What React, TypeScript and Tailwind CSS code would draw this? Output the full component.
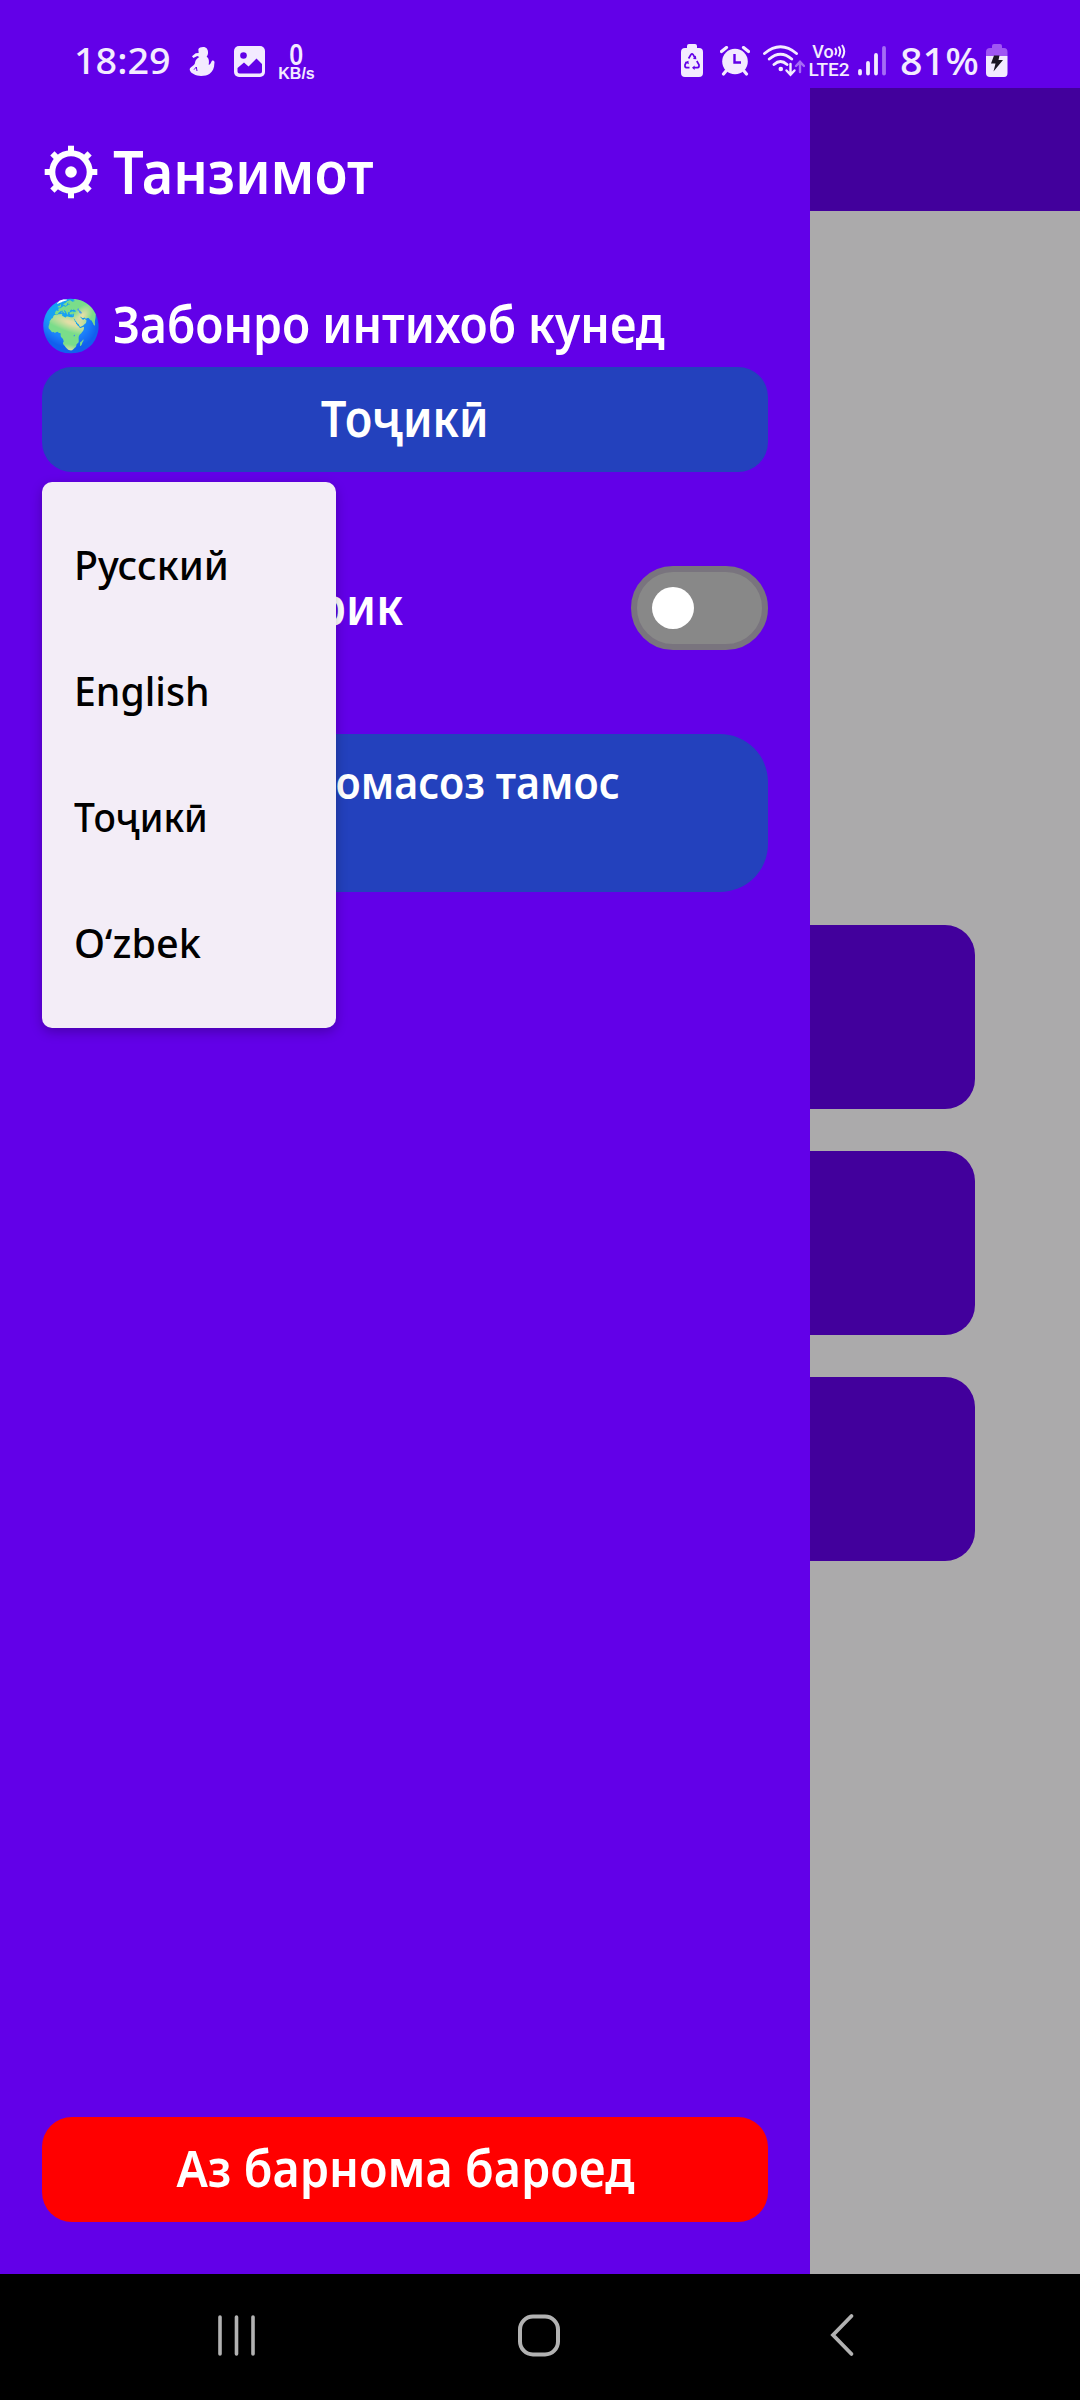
import type { ReactNode } from "react";

const languages = [
  { name: "Русский", cls: "scale-x-[0.985]" },
  { name: "English", cls: "scale-x-[0.98]" },
  { name: "Тоҷикӣ", cls: "scale-x-[0.93]" },
  { name: "Oʻzbek", cls: "scale-x-[0.99]" },
];

function Icon({ box, w, h, cls, children }: { box: string; w: number; h: number; cls: string; children: ReactNode }) {
  return (
    <svg viewBox={box} width={w} height={h} className={`block shrink-0 ${cls}`} fill="none">
      {children}
    </svg>
  );
}

function StatusBar() {
  return (
    <header className="flex h-[88px] w-full items-start bg-[#6200e8] text-[#f3ebff]">
      <span className="mt-[39px] ml-[74px] w-[98px] origin-left scale-x-[1.02] text-[37px] leading-[42px] font-medium whitespace-nowrap">18:29</span>
      {/* seated figure */}
      <Icon box="384 78 84 93" w={28} h={31} cls="mt-[46px] ml-[16px]">
        <path
          fill="currentColor"
          d="M415 88C418 80 436 78 441 86C446 94 445 104 440 110C447 114 448 124 446 134C452 134 453 126 456 122C462 120 465 125 463 131C463 143 458 154 449 161C438 169 414 170 402 163C392 158 387 151 390 145C394 138 404 137 405 128C406 120 412 114 418 111L412 108L400 114L396 109L407 100L416 99Z"
        />
        <path d="M402 149L409 141L411 153" stroke="#6200e8" strokeWidth="3" />
      </Icon>
      {/* picture */}
      <Icon box="0 0 31 31" w={31} h={31} cls="mt-[46px] ml-[18px]">
        <rect width="31" height="31" rx="5" fill="currentColor" />
        <circle cx="9.5" cy="9.5" r="3.3" fill="#6200e8" />
        <path d="M3.5 22L10 16.5L14.5 20.5L22.5 12.5L28 18V25.5Q28 27.5 26 27.5H5.500Q3.500 27.500 3.500 25.500Z" fill="#6200e8" />
      </Icon>
      <div className="mt-[39px] ml-[12px] flex w-[39px] flex-col items-center">
        <span className="h-[27px] origin-center scale-x-[0.84] text-[29px] leading-[29px] font-semibold">0</span>
        <span className="h-[16px] font-['Liberation_Sans'] text-[16px] leading-[16px] font-bold">KB/s</span>
      </div>

      {/* recycling battery */}
      <Icon box="0 0 22 33" w={22} h={33} cls="mt-[44px] ml-[365px]">
        <path d="M6 4V2Q6 0 8 0H14Q16 0 16 2V4H18Q22 4 22 8V29Q22 33 18 33H4Q0 33 0 29V8Q0 4 4 4Z" fill="currentColor" />
        <path d="M7.600 14.500L9.800 10.700Q11 9.200 12.200 10.700L13.700 13.500M15.800 17L18 20.800Q18.400 23.400 16.500 23.700H13M8.500 23.700H5.500Q3.600 23.400 4 20.800L5.500 18" stroke="#6200e8" strokeWidth="1.7" />
        <path d="M12 15L15.400 15.300L14.800 11.500ZM11 23.700L13.600 21.500V26ZM3.800 18.200L7.400 16.700L7.800 20.200Z" fill="#6200e8" />
      </Icon>
      {/* alarm */}
      <Icon box="0 0 30 30" w={30} h={30} cls="mt-[46px] ml-[17px]">
        <circle cx="15" cy="15.500" r="12.800" fill="currentColor" />
        <path d="M1.500 5.500L6.500 1.500M28.500 5.500L23.500 1.500M6 25L3.500 28M24 25L26.500 28" stroke="currentColor" strokeWidth="3.200" strokeLinecap="round" />
        <path d="M14.500 8V16.500H21" stroke="#6200e8" strokeWidth="2.400" />
      </Icon>
      {/* wi-fi with traffic arrows */}
      <Icon box="0 0 42 32" w={42} h={32} cls="mt-[45px] ml-[13px]">
        <path d="M1.500 8.500Q17.500 -5 33.500 8.500M6.300 14Q17.500 4.500 28.700 14M11 19.500Q17.500 13.500 24 19.500" stroke="currentColor" strokeWidth="2.900" strokeLinecap="round" />
        <circle cx="17.800" cy="24" r="2.300" fill="currentColor" />
        <path d="M27.500 19V29.500M23.500 25.500L27.500 29.800L31.500 25.500" stroke="currentColor" strokeWidth="2.400" strokeLinecap="round" />
        <path d="M37 27V17M33 21L37 16.800L41 21" stroke="#a56cf5" strokeWidth="2.400" strokeLinecap="round" />
      </Icon>
      <div className="mt-[44px] ml-[3px] flex w-[42px] flex-col items-center font-[Roboto]">
        <div className="flex h-[16px] items-start">
          <span className="text-[18px] leading-[16px] font-medium">Vo</span>
          <Icon box="0 0 12 15" w={12} h={15} cls="">
            <path d="M1 4Q3.500 7.500 1 11M4.500 2.500Q8 7.500 4.500 12.500M8 1Q12.500 7.500 8 14" stroke="currentColor" strokeWidth="2" />
          </Icon>
        </div>
        <span className="h-[18px] text-[19px] leading-[19px] font-medium">LTE2</span>
      </div>
      {/* signal strength */}
      <Icon box="0 0 28 30" w={28} h={30} cls="mt-[46px] ml-[8px]">
        <path d="M2 25V27.500M10 17V27.500M18 9V27.500" stroke="currentColor" strokeWidth="3.800" strokeLinecap="round" />
        <path d="M26 2V27.500" stroke="#a56cf5" strokeWidth="3.800" strokeLinecap="round" />
      </Icon>
      <span className="mt-[39px] ml-[14px] w-[78px] origin-left scale-x-[1.04] text-[38px] leading-[42px] font-medium whitespace-nowrap">81%</span>
      {/* charging battery */}
      <Icon box="0 0 22 33" w={22} h={33} cls="mt-[44px] ml-[8px]">
        <path d="M6 4V2Q6 0 8 0H14Q16 0 16 2V4H18Q21.500 4 21.500 8V12H0V8Q0 4 4 4Z" fill="#a056f3" />
        <path d="M0 12H21.500V29Q21.500 33 18 33H4Q0 33 0 29Z" fill="currentColor" />
        <path d="M8 11.500H13.500L12.500 16H17L7.500 27.500L9.500 19.500H5Z" fill="#1b1524" />
      </Icon>
    </header>
  );
}

function Gear() {
  return (
    <svg viewBox="-27 -27 54 54" width={54} height={54} className="block shrink-0">
      <circle r="18.700" fill="none" stroke="white" strokeWidth="6" />
      <circle r="5.800" fill="white" />
      {[0, 45, 90, 135, 180, 225, 270, 315].map((a) => (
        <rect key={a} x="-3" y="-26.300" width="6" height="7" fill="white" transform={`rotate(${a})`} />
      ))}
    </svg>
  );
}

function LanguageMenu() {
  return (
    <div className="absolute top-[394px] left-[42px] z-10 flex h-[546px] w-[294px] flex-col rounded-[10px] bg-[#f3edf7] py-[20px] text-black shadow-[0_4px_12px_rgba(0,0,0,0.25)]">
      {languages.map((l) => (
        <div key={l.name} className="flex h-[126px] items-center pl-[32px]">
          <span className={`origin-left text-[40px] leading-[54px] font-medium whitespace-nowrap ${l.cls}`}>{l.name}</span>
        </div>
      ))}
    </div>
  );
}

function Drawer() {
  return (
    <aside className="relative flex w-[810px] shrink-0 flex-col bg-[#6200e8] px-[42px] text-white">
      <h1 className="mt-[43px] flex h-[80px] items-center">
        <span className="ml-[2px] translate-y-px">
          <Gear />
        </span>
        <span className="ml-[15px] origin-left scale-x-[0.903] text-[60px] leading-[80px] font-semibold">Танзимот</span>
      </h1>

      <div className="mt-[78px] flex h-[78px] items-start">
        <span className="-ml-[2px] flex w-[73px] translate-y-px text-[50px] leading-[68px]">🌍</span>
        <span className="mt-px origin-left scale-x-[0.924] text-[50px] leading-[68px] font-semibold whitespace-nowrap">Забонро интихоб кунед</span>
      </div>
      <button className="flex h-[105px] w-full items-center justify-center rounded-[30px] bg-[#2341bd] pb-[4px]">
        <span className="scale-x-[0.905] text-[50px] leading-[68px] font-semibold">Тоҷикӣ</span>
      </button>

      <div className="mt-[94px] flex h-[84px] items-center justify-between">
        <span className="mb-[5px] w-[361px] origin-right scale-x-[0.92] text-right text-[50px] leading-[68px] font-semibold whitespace-nowrap">Ҳолати торик</span>
        <span className="flex h-[84px] w-[137px] items-center rounded-full border-[6px] border-[#79747e] bg-[#888888] pl-[15px]">
          <span className="size-[42px] rounded-full bg-white" />
        </span>
      </div>

      <button className="mt-[84px] flex h-[158px] w-full items-start rounded-[48px] bg-[#2341bd] pt-[18px]">
        <span className="w-[578px] origin-right scale-x-[0.918] text-right text-[45px] leading-[60px] font-semibold whitespace-nowrap">Бо барномасоз тамос</span>
      </button>

      <button className="mt-auto mb-[52px] flex h-[105px] w-full items-center justify-center rounded-[30px] bg-[#ff0000] pb-[4px]">
        <span className="scale-x-[0.937] text-[50px] leading-[68px] font-semibold whitespace-nowrap">Аз барнома бароед</span>
      </button>

      <LanguageMenu />
    </aside>
  );
}

export default function App() {
  return (
    <div className="flex h-[2400px] w-[1080px] flex-col overflow-hidden bg-black font-['Noto_Sans',sans-serif]">
      <StatusBar />
      <main className="flex h-[2186px]">
        <Drawer />
        <section className="flex flex-1 flex-col bg-[#abaaab]">
          <div className="h-[123px] bg-[#42009c]" />
          <div className="mt-[714px] flex w-[165px] flex-col gap-[42px]">
            {[0, 1, 2].map((n) => (
              <div key={n} className="h-[184px] rounded-r-[30px] bg-[#42009c]" />
            ))}
          </div>
        </section>
      </main>
      <nav className="flex h-[126px] items-start pt-[39px] text-[#b2b2b2]">
        <Icon box="0 0 40 44" w={40} h={44} cls="ml-[216px]">
          <path d="M4 4V41M20.500 4V41M37 4V41" stroke="currentColor" strokeWidth="3.600" strokeLinecap="round" />
        </Icon>
        <Icon box="0 0 44 44" w={44} h={44} cls="ml-[261px]">
          <rect x="3" y="3.500" width="38" height="38" rx="13" stroke="currentColor" strokeWidth="4" />
        </Icon>
        <Icon box="0 0 26 44" w={26} h={44} cls="ml-[268px]">
          <path d="M22.500 3L4 22L22.500 41" stroke="currentColor" strokeWidth="3.800" strokeLinecap="round" />
        </Icon>
      </nav>
    </div>
  );
}
